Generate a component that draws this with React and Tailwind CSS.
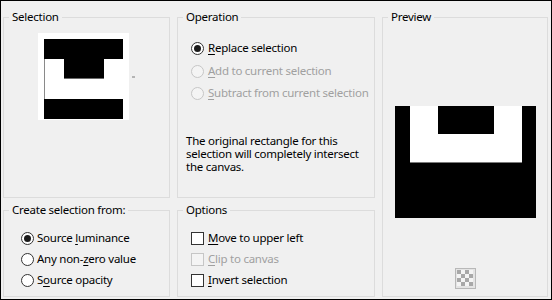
import React from 'react'

const Radio = ({ checked = false, disabled = false }) => (
  <span
    className={
      'w-[13px] h-[13px] rounded-full border flex items-center justify-center shrink-0 ' +
      (disabled ? 'border-[#c6c6c6] bg-[#f4f4f4]' : 'border-[#333333] bg-white')
    }
  >
    {checked && <span className="w-[7px] h-[7px] rounded-full bg-[#1b1b1b]" />}
  </span>
)

const Check = ({ disabled = false }) => (
  <span
    className={
      'w-[13px] h-[13px] border shrink-0 ' +
      (disabled ? 'border-[#c6c6c6] bg-[#f4f4f4]' : 'border-[#333333] bg-white')
    }
  />
)

// label with an underlined access key
const Label = ({ pre = '', k, post, disabled = false }) => (
  <span className={'whitespace-nowrap ' + (disabled ? 'text-[#a0a0a0]' : 'text-black')}>
    {pre}
    <u className="underline-offset-2">{k}</u>
    {post}
  </span>
)

function Group({ title, className = '', children }) {
  return (
    <fieldset className={'border border-[#dcdcdc] min-w-0 ' + className}>
      <legend className="ml-[5px] px-[3px] leading-[16px]">{title}</legend>
      {children}
    </fieldset>
  )
}

function SelectionThumb() {
  return (
    <div className="flex items-center mt-[8px] ml-[34px]">
      <div className="bg-white pt-[6px] pl-[6px] pr-[6px] pb-[1px]">
        <svg width="79" height="80" viewBox="0 0 79 80" className="block">
          <rect x="0" y="0" width="79" height="20" fill="#000" />
          <rect x="20" y="20" width="40" height="20" fill="#000" />
          <rect x="20" y="39" width="40" height="1" fill="#6a6a6a" />
          <rect x="0" y="20" width="1" height="40" fill="#8a8a8a" />
          <rect x="0" y="60" width="79" height="20" fill="#000" />
        </svg>
      </div>
      <span className="ml-[3px] w-[3px] h-[2px] bg-[#b4b4b4]" />
    </div>
  )
}

function PreviewImage() {
  return (
    <svg width="141" height="112" viewBox="0 0 141 112" className="block">
      <rect x="0" y="0" width="141" height="112" fill="#000" />
      <rect x="15" y="0" width="112" height="56" fill="#fff" />
      <rect x="15" y="56" width="112" height="1" fill="#7a7a7a" />
      <rect x="43" y="0" width="56" height="28" fill="#000" />
    </svg>
  )
}

function CheckerIcon() {
  const cells = []
  for (let r = 0; r < 4; r++) {
    for (let c = 0; c < 4; c++) {
      if ((r + c) % 2 === 0) cells.push(<rect key={r + '-' + c} x={2 + c * 4} y={2 + r * 4} width="4" height="4" fill="#a8a8a8" />)
    }
  }
  return (
    <svg width="21" height="21" viewBox="0 0 21 21" className="block">
      <rect x="0.5" y="0.5" width="20" height="20" fill="#e4e4e4" stroke="#b8b8b8" />
      <rect x="2" y="2" width="16" height="16" fill="#f4f4f4" />
      {cells}
    </svg>
  )
}

export default function App() {
  return (
    <div className="w-[552px] h-[300px] border border-black bg-[#f0f0f0] text-[11.5px] tracking-[-0.25px] text-black font-['Noto_Sans','Open_Sans',sans-serif] flex gap-[7px] pl-[2px] pt-[8px] overflow-hidden">
      {/* left column */}
      <div className="w-[167px] flex flex-col gap-[4px] shrink-0">
        <Group title="Selection" className="h-[189px]">
          <SelectionThumb />
        </Group>
        <Group title="Create selection from:" className="h-[95px]">
          <div className="flex flex-col mt-[12px] ml-[17px] gap-[5px]">
            <div className="flex items-center gap-[3px] h-[16px]">
              <Radio checked />
              <Label pre="Source " k="l" post="uminance" />
            </div>
            <div className="flex items-center gap-[3px] h-[16px]">
              <Radio />
              <Label pre="Any non-" k="z" post="ero value" />
            </div>
            <div className="flex items-center gap-[3px] h-[16px]">
              <Radio />
              <Label pre="S" k="o" post="urce opacity" />
            </div>
          </div>
        </Group>
      </div>

      {/* middle column */}
      <div className="w-[198px] flex flex-col gap-[4px] shrink-0">
        <Group title="Operation" className="h-[189px]">
          <div className="flex flex-col ml-[13px]">
            <div className="flex items-center gap-[4px] h-[16px] mt-[15px]">
              <Radio checked />
              <Label k="R" post="eplace selection" />
            </div>
            <div className="flex items-center gap-[4px] h-[16px] mt-[7px]">
              <Radio disabled />
              <Label k="A" post="dd to current selection" disabled />
            </div>
            <div className="flex items-center gap-[4px] h-[16px] mt-[6px]">
              <Radio disabled />
              <Label k="S" post="ubtract from current selection" disabled />
            </div>
          </div>
          <p className="mt-[33px] ml-[8px] leading-[13px] whitespace-nowrap">
            The original rectangle for this
            <br />
            selection will completely intersect
            <br />
            the canvas.
          </p>
        </Group>
        <Group title="Options" className="h-[95px]">
          <div className="flex flex-col mt-[12px] ml-[13px] gap-[5px]">
            <div className="flex items-center gap-[4px] h-[16px]">
              <Check />
              <Label k="M" post="ove to upper left" />
            </div>
            <div className="flex items-center gap-[4px] h-[16px]">
              <Check disabled />
              <Label k="C" post="lip to canvas" disabled />
            </div>
            <div className="flex items-center gap-[4px] h-[16px]">
              <Check />
              <Label k="I" post="nvert selection" />
            </div>
          </div>
        </Group>
      </div>

      {/* right column */}
      <div className="w-[166px] shrink-0">
        <Group title="Preview" className="h-[288px]">
          <div className="flex flex-col items-center">
            <div className="mt-[81px]">
              <PreviewImage />
            </div>
            <div className="mt-[50px]">
              <CheckerIcon />
            </div>
          </div>
        </Group>
      </div>
    </div>
  )
}
